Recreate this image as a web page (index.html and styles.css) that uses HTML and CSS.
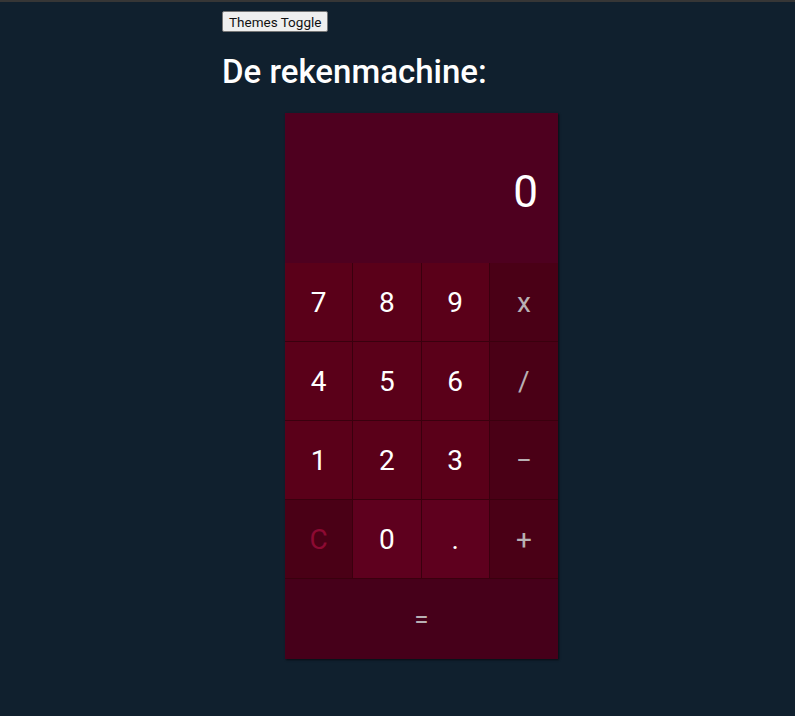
FILE: index.html
```html
<!DOCTYPE html>
<html lang="nl">
<head>
<meta charset="utf-8">
<title>De rekenmachine</title>
<link rel="stylesheet" href="styles.css">
</head>
<body>
<div class="page">
  <button class="toggle">Themes Toggle</button>
  <h1 class="title">De rekenmachine:</h1>
  <div class="calc">
    <div class="display">0</div>
    <div class="keys">
      <button class="key num">7</button>
      <button class="key num">8</button>
      <button class="key num">9</button>
      <button class="key op">x</button>
      <button class="key num">4</button>
      <button class="key num">5</button>
      <button class="key num">6</button>
      <button class="key op">/</button>
      <button class="key num">1</button>
      <button class="key num">2</button>
      <button class="key num">3</button>
      <button class="key op">&minus;</button>
      <button class="key clear">C</button>
      <button class="key num light">0</button>
      <button class="key num light">.</button>
      <button class="key op">+</button>
      <button class="key op equals">=</button>
    </div>
  </div>
</div>
</body>
</html>
```
FILE: styles.css
```css
html, body {
  margin: 0;
  padding: 0;
}
body {
  background: #10202e;
  border-top: 2px solid #363636;
  font-family: Roboto, "Liberation Sans", sans-serif;
  min-height: 714px;
}
.page {
  width: 400px;
  padding: 9px 0 0 222px;
}
.toggle {
  font-family: Roboto, "Liberation Sans", sans-serif;
  font-size: 13.5px;
  background: #efefef;
  color: #111;
  border: 1px solid #767676;
  border-radius: 2px;
  padding: 0 6px;
  height: 21px;
  display: block;
}
.title {
  color: #fff;
  font-size: 33px;
  font-weight: 500;
  margin: 21px 0 22px 0;
  line-height: 38px;
}
.calc {
  width: 273px;
  margin-left: 63px;
  box-shadow: 1px 1px 2px rgba(0,0,0,0.6);
}
.display {
  height: 150px;
  background: #4e001f;
  color: #fff;
  font-size: 44px;
  display: flex;
  align-items: center;
  justify-content: flex-end;
  padding: 8px 20px 0 0;
  box-sizing: border-box;
}
.keys {
  display: grid;
  grid-template-columns: repeat(4, 1fr);
  grid-template-rows: 79px 79px 79px 79px 80px;
}
.key {
  border: none;
  border-right: 1px solid #3a000e;
  border-bottom: 1px solid #3a000e;
  font-family: Roboto, "Liberation Sans", sans-serif;
  font-size: 28px;
  margin: 0;
  padding: 0;
  color: #fff;
}
.num {
  background: #5a0019;
}
.num.light {
  background: #5e001e;
}
.op {
  background: #4a0016;
  color: #b8b0b4;
  border-right: none;
}
.clear {
  background: #4a0016;
  color: #8c0a32;
}
.equals {
  grid-column: 1 / 5;
  font-size: 26px;
  border-bottom: none;
  background: #46001a;
}
```
